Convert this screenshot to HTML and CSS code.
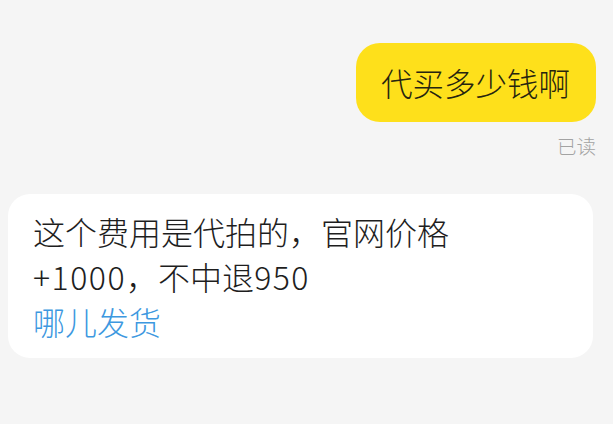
FILE: index.html
```html
<!DOCTYPE html>
<html lang="zh">
<head>
<meta charset="utf-8">
<link rel="stylesheet" href="styles.css">
</head>
<body>
<div class="chat">
  <div class="row-right">
    <div class="bubble-me">代买多少钱啊</div>
  </div>
  <div class="read">已读</div>
  <div class="bubble-them">
    <div class="line">这个费用是代拍的，官网价格</div>
    <div class="line"><span class="num">+1000</span>，不中退<span class="num">950</span></div>
    <div class="line link">哪儿发货</div>
  </div>
</div>
</body>
</html>
```
FILE: styles.css
```css
html, body {
  margin: 0;
  padding: 0;
  background: #f5f5f5;
}
body {
  width: 613px;
  height: 424px;
  overflow: hidden;
  font-family: "Noto Sans CJK SC", "Noto Sans", sans-serif;
  font-weight: 300;
  color: #1e1e1e;
}
.chat {
  display: flex;
  flex-direction: column;
  padding: 43px 17px 0 8px;
}
.row-right {
  display: flex;
  justify-content: flex-end;
}
.bubble-me {
  background: #fee01b;
  border-radius: 24px;
  height: 79px;
  width: 240px;
  box-sizing: border-box;
  padding: 0 0 0 25px;
  font-size: 31.5px;
  line-height: 79px;
  color: #26240f;
}
.read {
  align-self: flex-end;
  font-size: 19.5px;
  line-height: 24px;
  color: #a3a3a3;
  margin-top: 12px;
}
.bubble-them {
  margin-top: 36px;
  margin-right: 3px;
  background: #ffffff;
  border-radius: 22px;
  padding: 15px 20px 14px 25px;
  font-size: 32px;
  line-height: 45px;
}
.line {
  white-space: nowrap;
}
.num {
  letter-spacing: 1.5px;
}
.link {
  color: #3d98e0;
}
```
